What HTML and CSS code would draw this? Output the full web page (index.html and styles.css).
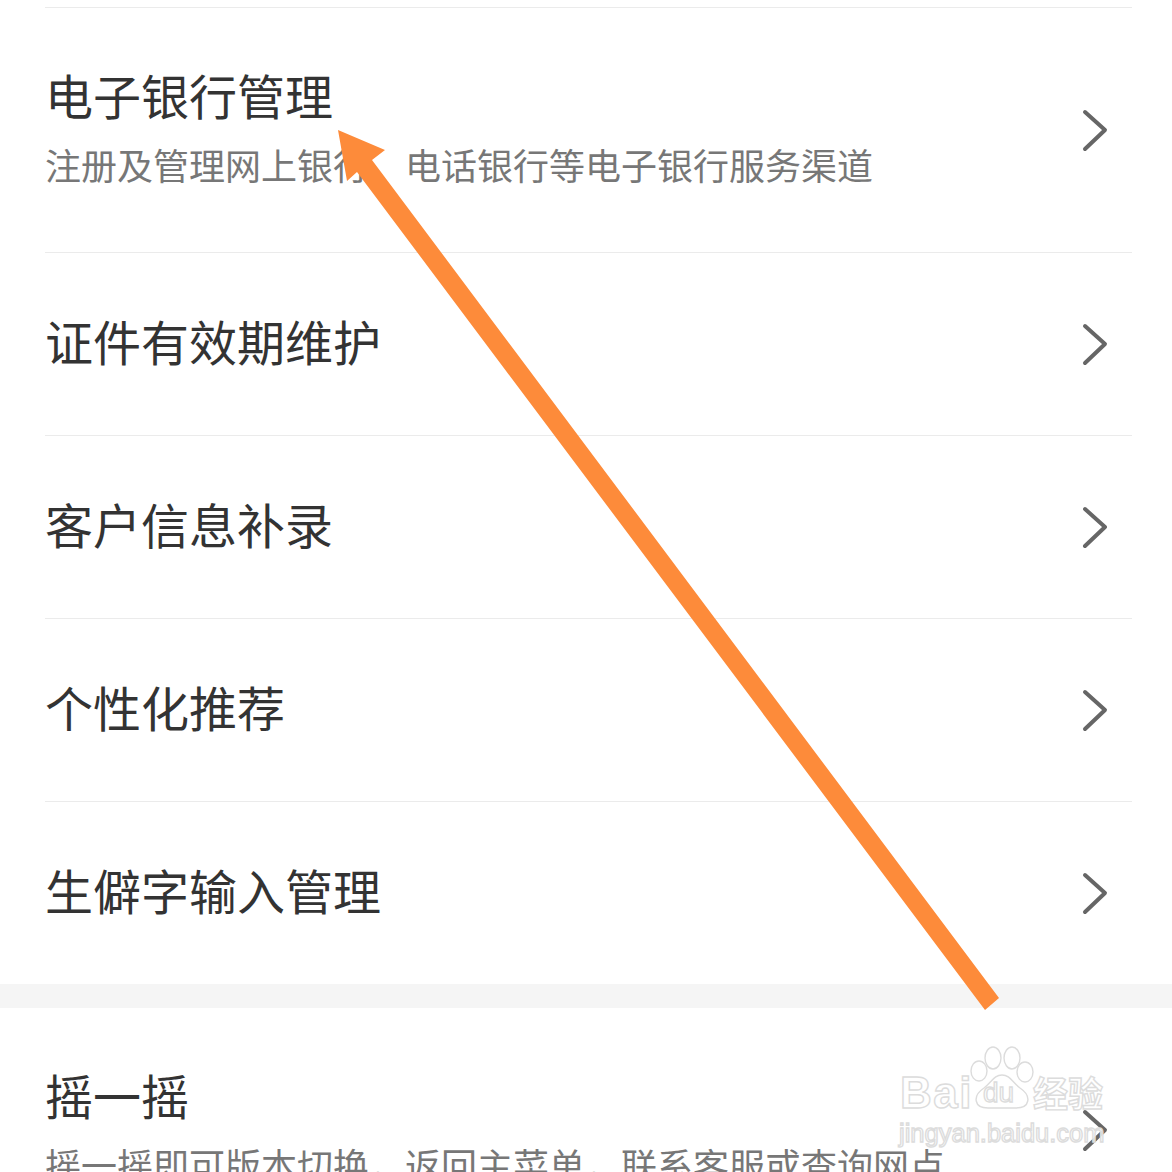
FILE: index.html
```html
<!DOCTYPE html>
<html lang="zh-CN">
<head>
  <meta charset="UTF-8" />
  <title>设置</title>
  <meta name="viewport" content="width=device-width, initial-scale=1.0" />
  <link rel="stylesheet" href="styles.css">
</head>
<body>

  <main class="page">
    <div class="group first-group">
      <div class="row row-tall">
        <div class="row-text">
          <div class="row-title">电子银行管理</div>
          <div class="row-sub">注册及管理网上银行，电话银行等电子银行服务渠道</div>
        </div>
        <svg class="chevron" viewBox="0 0 30 44"><path d="M5 4 L25 22 L5 41" /></svg>
      </div>
      <div class="row">
        <div class="row-title">证件有效期维护</div>
        <svg class="chevron" viewBox="0 0 30 44"><path d="M5 4 L25 22 L5 41" /></svg>
      </div>
      <div class="row">
        <div class="row-title">客户信息补录</div>
        <svg class="chevron" viewBox="0 0 30 44"><path d="M5 4 L25 22 L5 41" /></svg>
      </div>
      <div class="row">
        <div class="row-title">个性化推荐</div>
        <svg class="chevron" viewBox="0 0 30 44"><path d="M5 4 L25 22 L5 41" /></svg>
      </div>
      <div class="row">
        <div class="row-title">生僻字输入管理</div>
        <svg class="chevron" viewBox="0 0 30 44"><path d="M5 4 L25 22 L5 41" /></svg>
      </div>
    </div>

    <div class="band"></div>

    <div class="group">
      <div class="row row-tall">
        <div class="row-text">
          <div class="row-title">摇一摇</div>
          <div class="row-sub">摇一摇即可版本切换，返回主菜单，联系客服或查询网点</div>
        </div>
        <svg class="chevron" viewBox="0 0 30 44"><path d="M5 4 L25 22 L5 41" /></svg>
      </div>
    </div>
  </main>

  <!-- annotation arrow drawn over the screenshot -->
  <svg class="arrow" viewBox="0 0 1172 1172">
    <polygon points="338,130 385,150 372,160 999,998 985,1010 357,172 347,181" />
  </svg>

  <!-- watermark -->
  <div class="watermark">
    <svg class="paw" viewBox="0 0 64 66">
      <ellipse cx="23" cy="12" rx="8" ry="11" />
      <ellipse cx="42" cy="12" rx="8" ry="11" />
      <ellipse cx="9" cy="25" rx="8" ry="10" />
      <ellipse cx="55" cy="26" rx="8" ry="10" />
      <path d="M32 29 C24 29 22 36 14 42 C2 50 4 62 18 62 L46 62 C60 62 62 50 50 42 C42 36 40 29 32 29 Z" />
    </svg>
    <span class="wm-bai">Bai</span>
    <span class="wm-du">du</span>
    <span class="wm-jy">经验</span>
    <span class="wm-url">jingyan.baidu.com</span>
  </div>

</body>
</html>
```

FILE: styles.css
```css
html, body {
  margin: 0;
  padding: 0;
  height: 1172px;
  overflow: hidden;
  background: #fff;
}

body {
  position: relative;
  font-family: "Noto Sans CJK SC", "Liberation Sans", sans-serif;
}

.page {
  padding-top: 7px;
}

.group {
  background: #fff;
}

.row {
  box-sizing: border-box;
  height: 183px;
  margin-left: 45px;
  width: 1087px;
  padding-right: 22px;
  display: flex;
  justify-content: space-between;
  align-items: center;
  border-top: 1px solid #ebebeb;
}

.row > .row-title {
  margin-bottom: 8px;
}

.row-tall {
  height: 245px;
}

.group:last-child .row {
  border-top: none;
  height: 244px;
}

.row-title {
  font-size: 48px;
  line-height: 68px;
  color: #333;
  white-space: nowrap;
}

.row-sub {
  font-size: 36px;
  line-height: 72px;
  color: #777;
  white-space: nowrap;
}

.chevron {
  width: 30px;
  height: 44px;
  flex: none;
}

.chevron path {
  fill: none;
  stroke: #666;
  stroke-width: 4;
  stroke-linecap: round;
  stroke-linejoin: round;
}

.band {
  height: 24px;
  background: #f5f5f5;
}

.arrow {
  position: absolute;
  left: 0;
  top: 0;
  width: 1172px;
  height: 1172px;
}

.arrow polygon {
  fill: #fd8b3a;
}

.watermark {
  position: absolute;
  left: 898px;
  top: 1046px;
  width: 220px;
  height: 104px;
}

.watermark span {
  position: absolute;
  color: rgba(255, 255, 255, 0.8);
  -webkit-text-stroke: 1.4px #dcdcdc;
  white-space: nowrap;
}

.paw {
  position: absolute;
  left: 72px;
  top: 0;
  width: 64px;
  height: 66px;
}

.paw ellipse,
.paw path {
  fill: rgba(255, 255, 255, 0.6);
  stroke: #dcdcdc;
  stroke-width: 1.4;
}

.wm-bai {
  left: 2px;
  top: 19px;
  font-family: "Liberation Sans", sans-serif;
  font-weight: bold;
  font-size: 44px;
  letter-spacing: 1.5px;
  line-height: 56px;
}

.wm-du {
  left: 85px;
  top: 32px;
  font-family: "Liberation Sans", sans-serif;
  font-size: 28px;
  line-height: 30px;
}

.wm-jy {
  left: 135px;
  top: 24px;
  font-size: 35px;
  font-weight: bold;
  line-height: 44px;
}

.wm-url {
  left: 1px;
  top: 72px;
  font-family: "Liberation Sans", sans-serif;
  font-size: 25.5px;
  line-height: 30px;
  -webkit-text-stroke-width: 1px;
}
```
